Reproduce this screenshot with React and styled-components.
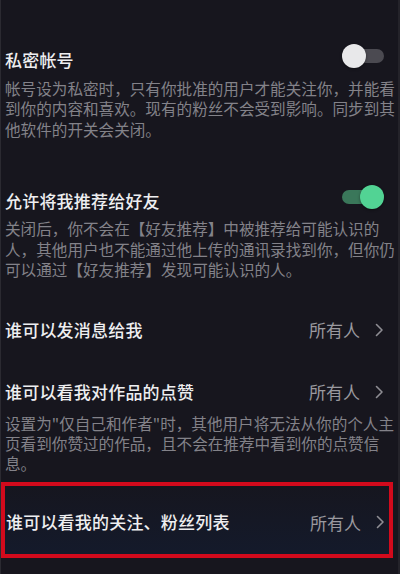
import React from 'react';
import styled, { createGlobalStyle } from 'styled-components';

const GlobalStyle = createGlobalStyle`
  html, body {
    margin: 0;
    padding: 0;
    background: #17161e;
  }
  body {
    font-family: "Noto Sans CJK SC", "Noto Sans", sans-serif;
  }
`;

const privacyDesc = [
  '帐号设为私密时，只有你批准的用户才能关注你，并能看',
  '到你的内容和喜欢。现有的粉丝不会受到影响。同步到其',
  '他软件的开关会关闭。',
];

const recommendDesc = [
  '关闭后，你不会在【好友推荐】中被推荐给可能认识的',
  '人，其他用户也不能通过他上传的通讯录找到你，但你仍',
  '可以通过【好友推荐】发现可能认识的人。',
];

const likesDesc = [
  '设置为"仅自己和作者"时，其他用户将无法从你的个人主',
  '页看到你赞过的作品，且不会在推荐中看到你的点赞信',
  '息。',
];

const Chevron = () => (
  <svg width="9" height="14" viewBox="0 0 9 14" fill="none">
    <polyline points="1.5,1.5 7,7 1.5,12.5" stroke="#8e8d93" strokeWidth="1.6" strokeLinecap="round" strokeLinejoin="round" />
  </svg>
);

const SwitchToggle = ({ on }) => (
  <Toggle>
    <Track $on={on} />
    <Thumb $on={on} />
  </Toggle>
);

const App = () => {
  return (
    <>
      <GlobalStyle />
      <Page>
        <Item>
          <Row>
            <Title>私密帐号</Title>
            <SwitchToggle on={false} />
          </Row>
          <Desc $mt={5.5}>
            {privacyDesc.map((line) => (
              <Line key={line}>{line}</Line>
            ))}
          </Desc>
        </Item>

        <Item $mt={50}>
          <Row>
            <Title>允许将我推荐给好友</Title>
            <SwitchToggle on />
          </Row>
          <Desc $mt={5}>
            {recommendDesc.map((line) => (
              <Line key={line}>{line}</Line>
            ))}
          </Desc>
        </Item>

        <Item $mt={38}>
          <Row>
            <Title>谁可以发消息给我</Title>
            <Value>
              所有人
              <Chevron />
            </Value>
          </Row>
        </Item>

        <Item $mt={38}>
          <Row>
            <Title>谁可以看我对作品的点赞</Title>
            <Value>
              所有人
              <Chevron />
            </Value>
          </Row>
          <Desc $mt={9} $lh={20}>
            {likesDesc.map((line) => (
              <Line key={line}>{line}</Line>
            ))}
          </Desc>
        </Item>

        <Highlight>
          <HighlightRow>
            <Title>谁可以看我的关注、粉丝列表</Title>
            <Value>
              所有人
              <Chevron />
            </Value>
          </HighlightRow>
        </Highlight>
      </Page>
    </>
  );
};

export default App;

const Page = styled.div`
  box-sizing: border-box;
  width: 400px;
  height: 574px;
  padding-top: 48px;
  background: #17161e;
  border-left: 1px solid #2b2a31;
  border-right: 2px solid #24232a;
  overflow: hidden;
`;

const Item = styled.div`
  margin-top: ${(p) => p.$mt || 0}px;
  padding-left: 4px;
`;

const Row = styled.div`
  display: flex;
  align-items: center;
  justify-content: space-between;
  height: 24px;
  padding-right: 14px;
`;

const Title = styled.span`
  font-size: 17px;
  line-height: 24px;
  font-weight: 500;
  color: #eeeef0;
  letter-spacing: 0.2px;
`;

const Desc = styled.div`
  margin-top: ${(p) => p.$mt || 0}px;
  font-size: 15.6px;
  line-height: ${(p) => p.$lh || 20.5}px;
  color: #838289;
`;

const Line = styled.div`
  white-space: nowrap;
`;

const Value = styled.span`
  display: flex;
  align-items: center;
  gap: 15px;
  font-size: 17px;
  color: #9a999f;
  margin-right: 0;
`;

const Toggle = styled.div`
  position: relative;
  width: 42px;
  height: 24px;
  margin-top: -8px;
`;

const Track = styled.div`
  position: absolute;
  top: 5px;
  bottom: 5px;
  left: ${(p) => (p.$on ? '0' : '4px')};
  right: ${(p) => (p.$on ? '6px' : '0')};
  border-radius: 8px;
  background: ${(p) => (p.$on ? '#3a775a' : '#4b4a51')};
`;

const Thumb = styled.div`
  position: absolute;
  top: 0;
  ${(p) => (p.$on ? 'right: 0;' : 'left: 0;')}
  width: 24px;
  height: 24px;
  border-radius: 50%;
  background: ${(p) => (p.$on ? '#52d394' : '#e8e8ea')};
  box-shadow: 0 1px 3px rgba(0, 0, 0, 0.4);
`;

const Highlight = styled.div`
  box-sizing: border-box;
  margin-top: 9px;
  width: 392px;
  height: 76px;
  border: 4px solid #d20a1c;
  background: linear-gradient(180deg, #16161f 0%, #141a2b 100%);
`;

const HighlightRow = styled.div`
  display: flex;
  align-items: center;
  justify-content: space-between;
  height: 100%;
  padding: 5px 4px 0 1px;
  box-sizing: border-box;
`;
